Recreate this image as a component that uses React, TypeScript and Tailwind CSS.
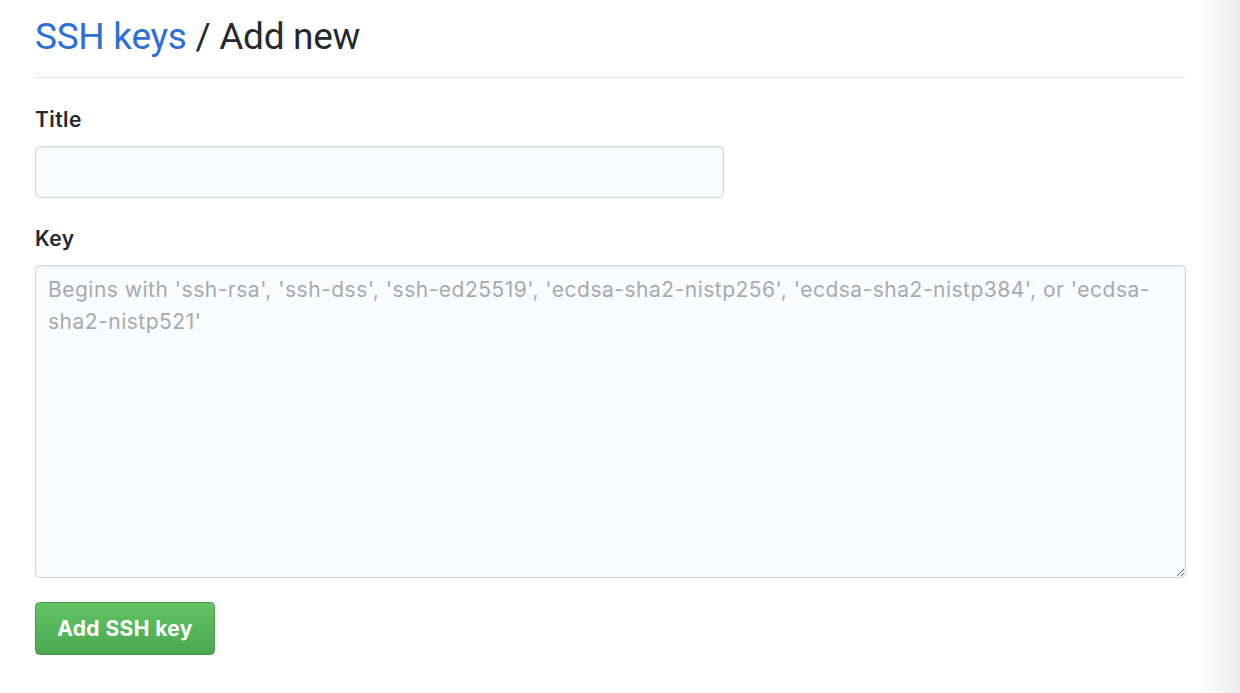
import React from 'react';

// Add SSH key form page
export default function App() {
  return (
    <div
      className="flex min-h-screen bg-white text-[#24292e]"
      style={{ fontFamily: 'Inter, "Liberation Sans", Arial, sans-serif' }}
    >
      {/* Main column */}
      <div className="w-[1198px] shrink-0 pl-[35px] pr-[12px]">
        {/* Heading */}
        <div className="pt-[13px] pb-[16px] border-b-[1.5px] border-[#e1e4e8]">
          <h1
            className="text-[37px] leading-[48px] font-normal tracking-[-0.3px]"
            style={{ fontFamily: 'Roboto, "Liberation Sans", Arial, sans-serif' }}
          >
            <a className="text-[#2d6fd6]">SSH keys</a> / Add new
          </h1>
        </div>

        <form className="pt-[26px] tracking-[0.4px]">
          {/* Title */}
          <label className="block text-[21px] leading-[31.5px] font-semibold">Title</label>
          <input
            type="text"
            className="mt-[10.5px] block w-[689px] h-[52px] px-[12px] text-[21px] bg-[#fafbfc] border-[1.5px] border-[#d1d5da] rounded-[4.5px] shadow-[inset_0_1.5px_3px_rgba(27,31,35,0.075)] outline-none"
          />

          {/* Key */}
          <label className="block mt-[25px] text-[21px] leading-[31.5px] font-semibold">Key</label>
          <textarea
            className="mt-[10.5px] block w-full h-[313px] py-[8px] px-[12px] text-[21px] leading-[31.5px] tracking-[0.5px] bg-[#fafbfc] border-[1.5px] border-[#d1d5da] rounded-[4.5px] shadow-[inset_0_1.5px_3px_rgba(27,31,35,0.075)] outline-none placeholder:text-[#a4abb2]"
            placeholder="Begins with 'ssh-rsa', 'ssh-dss', 'ssh-ed25519', 'ecdsa-sha2-nistp256', 'ecdsa-sha2-nistp384', or 'ecdsa-sha2-nistp521'"
          />

          {/* Submit */}
          <button
            type="button"
            className="mt-[24px] block w-[180px] h-[53px] text-[21px] font-bold tracking-[0.4px] text-white rounded-[4.5px] border-[1.5px] border-[#44984a] bg-gradient-to-b from-[#62c466] to-[#4aa84e]"
          >
            Add SSH key
          </button>
        </form>
      </div>

      {/* Right edge shade */}
      <div className="flex-1 bg-gradient-to-r from-white to-[#ececec]" />
    </div>
  );
}
